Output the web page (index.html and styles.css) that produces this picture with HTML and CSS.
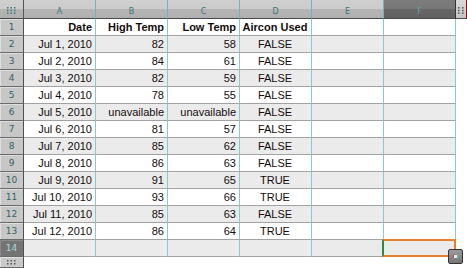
FILE: index.html
```html
<!DOCTYPE html>
<html>
<head>
<meta charset="utf-8">
<link rel="stylesheet" href="styles.css">
</head>
<body>
<div class="sheet">
  <div class="hdr">
    <div class="corner"><svg width="9" height="7" viewBox="0 0 9 7"><g fill="#3d7a7c"><rect x="0" y="0" width="1.5" height="1.5"/><rect x="3.5" y="0" width="1.5" height="1.5"/><rect x="7" y="0" width="1.5" height="1.5"/><rect x="0" y="2.7" width="1.5" height="1.5"/><rect x="3.5" y="2.7" width="1.5" height="1.5"/><rect x="7" y="2.7" width="1.5" height="1.5"/><rect x="0" y="5.4" width="1.5" height="1.5"/><rect x="3.5" y="5.4" width="1.5" height="1.5"/><rect x="7" y="5.4" width="1.5" height="1.5"/></g></svg></div>
    <div class="ch">A</div><div class="ch">B</div><div class="ch">C</div><div class="ch">D</div><div class="ch">E</div><div class="ch on">F</div>
    <div class="chend"><svg width="6" height="7" viewBox="0 0 6 7"><g fill="#555"><rect x="0" y="0" width="1.5" height="1.5"/><rect x="4" y="0" width="1.5" height="1.5"/><rect x="0" y="2.7" width="1.5" height="1.5"/><rect x="4" y="2.7" width="1.5" height="1.5"/><rect x="0" y="5.4" width="1.5" height="1.5"/><rect x="4" y="5.4" width="1.5" height="1.5"/></g></svg></div>
  </div>

  <div class="row"><div class="rh">1</div><div class="c b">Date</div><div class="c b">High Temp</div><div class="c b">Low Temp</div><div class="c b m">Aircon Used</div><div class="c"></div><div class="c"></div><div class="e"></div></div>
  <div class="row alt"><div class="rh">2</div><div class="c">Jul 1, 2010</div><div class="c">82</div><div class="c">58</div><div class="c m">FALSE</div><div class="c"></div><div class="c"></div><div class="e"></div></div>
  <div class="row"><div class="rh">3</div><div class="c">Jul 2, 2010</div><div class="c">84</div><div class="c">61</div><div class="c m">FALSE</div><div class="c"></div><div class="c"></div><div class="e"></div></div>
  <div class="row alt"><div class="rh">4</div><div class="c">Jul 3, 2010</div><div class="c">82</div><div class="c">59</div><div class="c m">FALSE</div><div class="c"></div><div class="c"></div><div class="e"></div></div>
  <div class="row"><div class="rh">5</div><div class="c">Jul 4, 2010</div><div class="c">78</div><div class="c">55</div><div class="c m">FALSE</div><div class="c"></div><div class="c"></div><div class="e"></div></div>
  <div class="row alt"><div class="rh">6</div><div class="c">Jul 5, 2010</div><div class="c">unavailable</div><div class="c">unavailable</div><div class="c m">FALSE</div><div class="c"></div><div class="c"></div><div class="e"></div></div>
  <div class="row"><div class="rh">7</div><div class="c">Jul 6, 2010</div><div class="c">81</div><div class="c">57</div><div class="c m">FALSE</div><div class="c"></div><div class="c"></div><div class="e"></div></div>
  <div class="row alt"><div class="rh">8</div><div class="c">Jul 7, 2010</div><div class="c">85</div><div class="c">62</div><div class="c m">FALSE</div><div class="c"></div><div class="c"></div><div class="e"></div></div>
  <div class="row"><div class="rh">9</div><div class="c">Jul 8, 2010</div><div class="c">86</div><div class="c">63</div><div class="c m">FALSE</div><div class="c"></div><div class="c"></div><div class="e"></div></div>
  <div class="row alt"><div class="rh">10</div><div class="c">Jul 9, 2010</div><div class="c">91</div><div class="c">65</div><div class="c m">TRUE</div><div class="c"></div><div class="c"></div><div class="e"></div></div>
  <div class="row"><div class="rh">11</div><div class="c">Jul 10, 2010</div><div class="c">93</div><div class="c">66</div><div class="c m">TRUE</div><div class="c"></div><div class="c"></div><div class="e"></div></div>
  <div class="row alt"><div class="rh">12</div><div class="c">Jul 11, 2010</div><div class="c">85</div><div class="c">63</div><div class="c m">FALSE</div><div class="c"></div><div class="c"></div><div class="e"></div></div>
  <div class="row"><div class="rh">13</div><div class="c">Jul 12, 2010</div><div class="c">86</div><div class="c">64</div><div class="c m">TRUE</div><div class="c"></div><div class="c"></div><div class="e"></div></div>
  <div class="row alt"><div class="rh on">14</div><div class="c"></div><div class="c"></div><div class="c"></div><div class="c"></div><div class="c"></div><div class="c sel"><span class="handle"><span class="dot"></span></span></div><div class="e"></div></div>

  <div class="foot">
    <div class="grip"><svg width="9" height="5" viewBox="0 0 9 5"><g fill="#555"><rect x="0" y="0" width="1.5" height="1.5"/><rect x="3.5" y="0" width="1.5" height="1.5"/><rect x="7" y="0" width="1.5" height="1.5"/><rect x="0" y="3" width="1.5" height="1.5"/><rect x="3.5" y="3" width="1.5" height="1.5"/><rect x="7" y="3" width="1.5" height="1.5"/></g></svg></div>
  </div>
</div>
</body>
</html>
```

FILE: styles.css
```css
html, body {
  margin: 0;
  padding: 0;
  background: #ffffff;
}

.sheet {
  display: grid;
  grid-template-columns: 24px repeat(6, 72px) 11px;
  grid-template-rows: 19px repeat(14, 17px) 11px;
  width: 467px;
  height: 268px;
  font-family: "Liberation Sans", Arial, sans-serif;
  overflow: hidden;
}

.hdr, .row, .foot {
  display: contents;
}

.corner, .ch, .chend {
  box-sizing: border-box;
  border-bottom: 1px solid #4a4a4a;
  background: linear-gradient(#d0d0d0 0, #cbcbcb 50%, #b4b4b4 52%, #b0b0b0 100%);
  display: flex;
  align-items: center;
  justify-content: center;
}

.corner {
  border-right: 1px solid #555;
  padding-top: 2px;
}

.ch {
  border-right: 1px solid #6fb6b8;
  font-family: "DejaVu Sans", sans-serif;
  font-size: 8px;
  color: #3a7577;
  padding-top: 4px;
}

.ch.on {
  background: linear-gradient(#7c7c7c 0, #777 50%, #666 52%, #626262 100%);
  border-right: 1px solid #333;
  color: #5aa0a2;
}

.chend {
  background: linear-gradient(#d8d8d8, #c4c4c4);
  border-right: 1px solid #7a1a1a;
  padding-top: 3px;
}

.rh {
  box-sizing: border-box;
  background: #c7c7c7;
  border-right: 1px solid #4f4f4f;
  border-bottom: 1px solid #6a6a6a;
  box-shadow: inset 1px 1px 0 #dedede;
  font-family: "DejaVu Sans", sans-serif;
  font-size: 9px;
  color: #2f6466;
  display: flex;
  align-items: center;
  justify-content: center;
}

.rh.on {
  background: #747474;
  box-shadow: inset 1px 1px 0 #8a8a8a;
  color: #a8d8da;
}

.c {
  box-sizing: border-box;
  border-right: 1px solid #86cccc;
  border-bottom: 1px solid #a2a2a2;
  background: #ffffff;
  font-size: 11px;
  line-height: 16px;
  color: #140c0c;
  text-align: right;
  padding: 0 3px 0 2px;
  white-space: nowrap;
}

.alt .c {
  background: #ebebeb;
}

.c.b {
  font-weight: bold;
}

.c.m {
  text-align: center;
}

.e {
  background: #ffffff;
}

.sel {
  position: relative;
}

.sel::after {
  content: "";
  position: absolute;
  left: -2px;
  top: -1px;
  right: -1px;
  bottom: -1px;
  border: 2px solid #e6802c;
  border-left-color: #2f8a3a;
  pointer-events: none;
}

.handle {
  position: absolute;
  right: -8px;
  bottom: -8px;
  width: 15px;
  height: 15px;
  box-sizing: border-box;
  background: linear-gradient(#9a9a9a, #777777);
  border: 1px solid #333333;
  border-radius: 2px;
  z-index: 2;
  display: flex;
  align-items: center;
  justify-content: center;
}

.dot {
  width: 3px;
  height: 3px;
  background: #e8e8f0;
  box-shadow: -1px 0 0 #d04040, 1px 0 0 #40c0d0;
}

.grip {
  box-sizing: border-box;
  background: #c9c9c9;
  border-right: 1px solid #4f4f4f;
  border-bottom: 1px solid #6a6a6a;
  box-shadow: inset 1px 1px 0 #e0e0e0;
  display: flex;
  align-items: center;
  justify-content: center;
}
```
